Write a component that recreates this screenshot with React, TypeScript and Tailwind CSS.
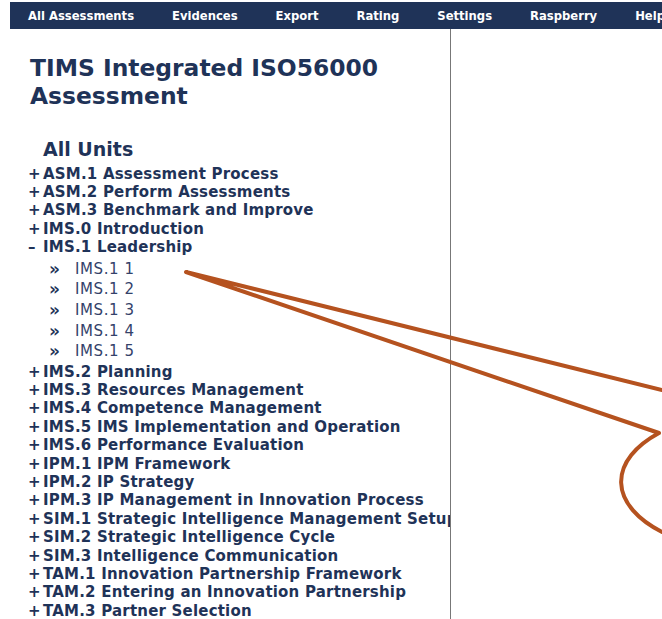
import { useState } from 'react'

const NAV_ITEMS = ['All Assessments', 'Evidences', 'Export', 'Rating', 'Settings', 'Raspberry', 'Help']

interface Unit {
  code: string
  title: string
  children?: string[]
}

const UNITS: Unit[] = [
  { code: 'ASM.1', title: 'Assessment Process' },
  { code: 'ASM.2', title: 'Perform Assessments' },
  { code: 'ASM.3', title: 'Benchmark and Improve' },
  { code: 'IMS.0', title: 'Introduction' },
  { code: 'IMS.1', title: 'Leadership', children: ['IMS.1 1', 'IMS.1 2', 'IMS.1 3', 'IMS.1 4', 'IMS.1 5'] },
  { code: 'IMS.2', title: 'Planning' },
  { code: 'IMS.3', title: 'Resources Management' },
  { code: 'IMS.4', title: 'Competence Management' },
  { code: 'IMS.5', title: 'IMS Implementation and Operation' },
  { code: 'IMS.6', title: 'Performance Evaluation' },
  { code: 'IPM.1', title: 'IPM Framework' },
  { code: 'IPM.2', title: 'IP Strategy' },
  { code: 'IPM.3', title: 'IP Management in Innovation Process' },
  { code: 'SIM.1', title: 'Strategic Intelligence Management Setup' },
  { code: 'SIM.2', title: 'Strategic Intelligence Cycle' },
  { code: 'SIM.3', title: 'Intelligence Communication' },
  { code: 'TAM.1', title: 'Innovation Partnership Framework' },
  { code: 'TAM.2', title: 'Entering an Innovation Partnership' },
  { code: 'TAM.3', title: 'Partner Selection' },
]

function UnitRow({ unit, open, onToggle }: { unit: Unit; open: boolean; onToggle: () => void }) {
  return (
    <li>
      <button
        onClick={onToggle}
        className="flex h-[18.4px] items-center whitespace-nowrap text-left text-[15px] font-bold leading-none tracking-[0.2px] text-[#1f3358]"
      >
        <span className="w-[15px] text-[15px]">{open ? '–' : '+'}</span>
        <span>
          {unit.code} {unit.title}
        </span>
      </button>
      {open && unit.children && (
        <ul className="pt-[2px] pb-[1px]">
          {unit.children.map(c => (
            <li key={c} className="flex h-[20.6px] items-center pl-[21px] text-[15px] leading-none tracking-[0.6px] text-[#34426a]">
              <span className="w-[26px] text-[17px] font-bold text-[#1f3358]">»</span>
              <span>{c}</span>
            </li>
          ))}
        </ul>
      )}
    </li>
  )
}

export default function App() {
  const [openCode, setOpenCode] = useState<string | null>('IMS.1')

  return (
    <div className="relative h-[619px] w-[662px] overflow-hidden bg-white font-['Verdana','DejaVu_Sans',sans-serif]">
      {/* Top menu */}
      <nav className="ml-[10px] mt-[2px] flex h-[27px] items-center overflow-hidden whitespace-nowrap bg-[#1f3358] pl-[18px] pt-[3px]">
        {NAV_ITEMS.map(item => (
          <a key={item} className="mr-[38px] shrink-0 text-[11.6px] font-bold text-white">
            {item}
          </a>
        ))}
      </nav>

      <div className="flex">
        {/* Unit tree */}
        <aside className="w-[450px] shrink-0 overflow-hidden pl-[28px]">
          <h1 className="mt-[25px] pl-[2px] text-[23.4px] font-bold leading-[28px] text-[#1f3358]">
            TIMS Integrated ISO56000
            <br />
            Assessment
          </h1>
          <h2 className="mt-[27px] pl-[15px] text-[19px] font-bold leading-[24px] text-[#1f3358]">All Units</h2>
          <ul className="mt-[4px]">
            {UNITS.map(u => (
              <UnitRow
                key={u.code}
                unit={u}
                open={openCode === u.code}
                onToggle={() => setOpenCode(openCode === u.code ? null : u.code)}
              />
            ))}
          </ul>
        </aside>
        <div className="h-[590px] w-px bg-[#777]" />
        <main className="flex-1" />
      </div>

      {/* Callout annotation */}
      <svg className="pointer-events-none absolute inset-0" width="662" height="619" viewBox="0 0 662 619">
        <path
          d="M662 390 L186 272 L659 433 A139 71 0 0 0 662 532"
          fill="none"
          stroke="#b5521f"
          strokeWidth="4"
          strokeLinejoin="round"
          strokeLinecap="round"
        />
      </svg>
    </div>
  )
}
